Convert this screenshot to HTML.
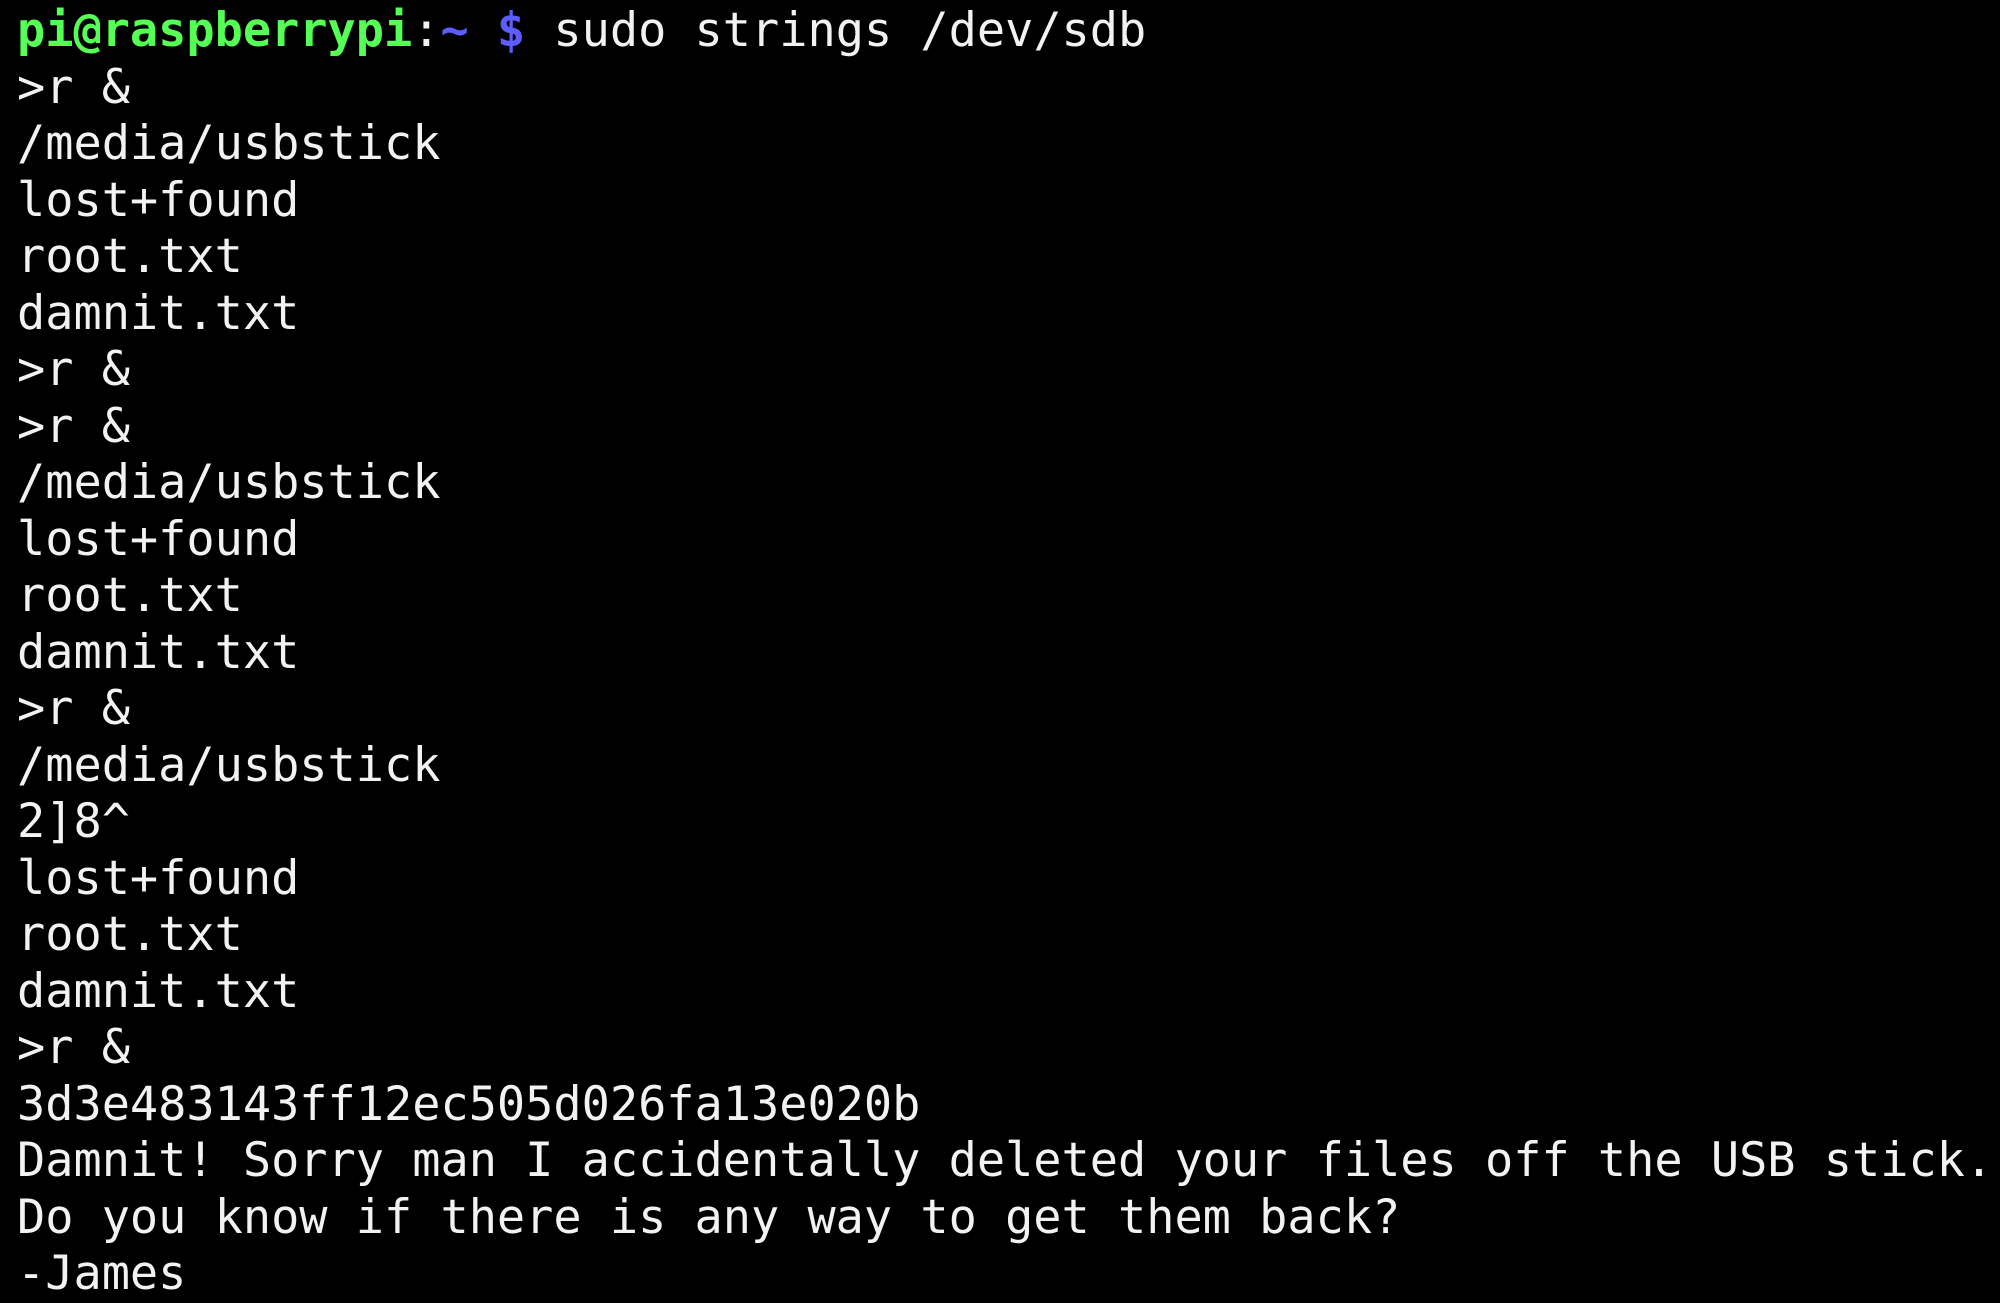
<!DOCTYPE html>
<html><head><meta charset="utf-8"><style>
html,body{margin:0;padding:0;background:#000;width:2000px;height:1303px;overflow:hidden}
pre{margin:0;padding:3px 0 0 17px;font-family:"DejaVu Sans Mono","Liberation Mono",monospace;font-size:46.9px;line-height:56.5px;color:#f2f2f2}
.g{color:#55ff55;font-weight:bold}.b{color:#5c5cff;font-weight:bold}
</style></head><body><pre><span class="g">pi@raspberrypi</span>:<span class="b">~ $</span> sudo strings /dev/sdb
&gt;r &amp;
/media/usbstick
lost+found
root.txt
damnit.txt
&gt;r &amp;
&gt;r &amp;
/media/usbstick
lost+found
root.txt
damnit.txt
&gt;r &amp;
/media/usbstick
2]8^
lost+found
root.txt
damnit.txt
&gt;r &amp;
3d3e483143ff12ec505d026fa13e020b
Damnit! Sorry man I accidentally deleted your files off the USB stick.
Do you know if there is any way to get them back?
-James</pre></body></html>
